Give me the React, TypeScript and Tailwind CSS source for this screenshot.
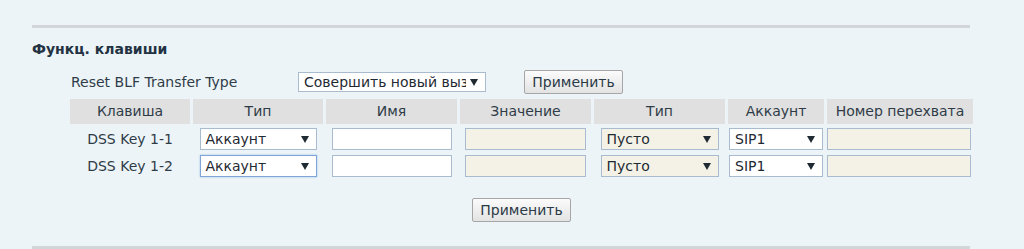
import React from 'react'

const font = { fontFamily: '"DejaVu Sans", Verdana, sans-serif' }

function Arrow() {
  return (
    <svg width="8" height="7" viewBox="0 0 8 7" className="ml-[4px] mr-[7px] shrink-0">
      <path d="M0 0 H8 L4 7 Z" fill="#1f2a33" />
    </svg>
  )
}

function Select({
  value,
  w,
  h = 'h-[22px]',
  beige = false,
  focused = false,
}: {
  value: string
  w: string
  h?: string
  beige?: boolean
  focused?: boolean
}) {
  return (
    <div
      className={`flex items-center border text-[14px] text-[#1f2a33] ${h} ${w} ${beige ? 'bg-[#f4f2e7]' : 'bg-white'} ${
        focused ? 'border-[#7fa6d6] shadow-[0_0_2px_#9cc0ea]' : 'border-[#a9bccf]'
      }`}
    >
      <span className="min-w-0 flex-1 overflow-hidden whitespace-nowrap pl-[5px]">{value}</span>
      <Arrow />
    </div>
  )
}

function Input({ w, disabled = false }: { w: string; disabled?: boolean }) {
  return <div className={`h-[22px] ${w} border border-[#a9bccf] ${disabled ? 'bg-[#f4f2e7]' : 'bg-white'}`} />
}

function Button() {
  return (
    <button className="h-[24px] w-[99px] rounded-[2px] border border-[#a6a6a6] bg-gradient-to-b from-[#fbfbfb] to-[#e3e3e3] text-[14px] leading-[22px] text-[#2b3a47]">
      Применить
    </button>
  )
}

const headers = ['Клавиша', 'Тип', 'Имя', 'Значение', 'Тип', 'Аккаунт', 'Номер перехвата']

function KeyRow({ label, focused }: { label: string; focused?: boolean }) {
  return (
    <>
      <div className="flex h-[24px] items-center justify-center text-[14px] text-[#2f3c48]">{label}</div>
      <div className="flex h-[24px] items-center justify-center">
        <Select value="Аккаунт" w="w-[117px]" focused={focused} />
      </div>
      <div className="flex h-[24px] items-center justify-center">
        <Input w="w-[120px]" />
      </div>
      <div className="flex h-[24px] items-center justify-center">
        <Input w="w-[121px]" disabled />
      </div>
      <div className="flex h-[24px] items-center justify-center">
        <Select value="Пусто" w="w-[118px]" beige />
      </div>
      <div className="flex h-[24px] items-center justify-center">
        <Select value="SIP1" w="w-[94px]" />
      </div>
      <div className="flex h-[24px] items-center justify-start">
        <Input w="w-[144px]" disabled />
      </div>
    </>
  )
}

export default function App() {
  return (
    <div className="h-[249px] w-[1024px] overflow-hidden bg-[#edf4f7] pt-[25px]" style={font}>
      <div className="ml-[32px] w-[938px] border-t-[3px] border-[#d3d6d8]" />

      <h2 className="ml-[32px] mt-[13px] text-[14px] font-bold leading-[16px] text-[#233242]">Функц. клавиши</h2>

      <div className="ml-[71px] mt-[13px] flex items-center">
        <span className="w-[227px] text-[14px] text-[#2f3c48]">Reset BLF Transfer Type</span>
        <Select value="Совершить новый вызов" w="w-[188px]" h="h-[20px]" />
        <div className="ml-[38px]">
          <Button />
        </div>
      </div>

      <div className="ml-[70px] mt-[5px] w-[903px]">
        <div className="grid grid-cols-[120px_130px_131px_131px_131px_96px_146px] gap-x-[3px] gap-y-[3px]">
          {headers.map((h, i) => (
            <div key={i} className="flex h-[25px] items-center justify-center bg-[#e0e0e0] text-[14px] text-[#2f3c48]">
              {h}
            </div>
          ))}
          <KeyRow label="DSS Key 1-1" />
          <KeyRow label="DSS Key 1-2" focused />
        </div>

        <div className="mt-[20px] flex justify-center">
          <Button />
        </div>
      </div>

      <div className="ml-[32px] mt-[24px] w-[938px] border-t-[3px] border-[#d3d6d8]" />
    </div>
  )
}
